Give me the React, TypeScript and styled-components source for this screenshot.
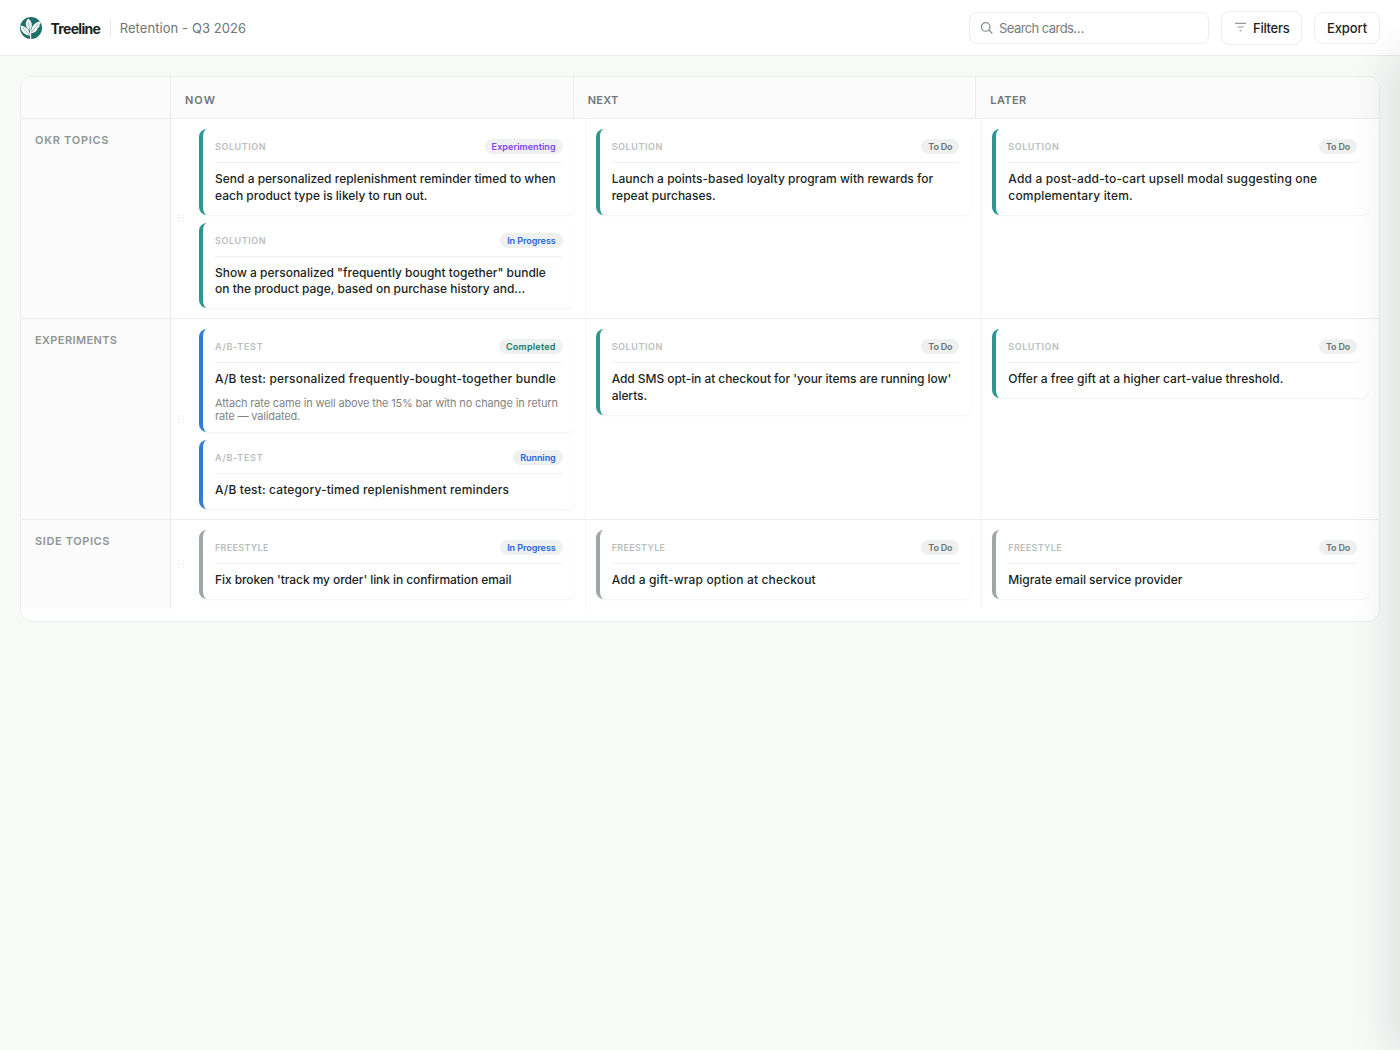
import React from "react";
import styled, { createGlobalStyle } from "styled-components";

const GlobalStyle = createGlobalStyle`
  * { box-sizing: border-box; }
  html, body { margin: 0; padding: 0; }
  body {
    background: #f8faf8;
    color: #1b1f1e;
    font-family: Inter, "Liberation Sans", sans-serif;
    overflow: hidden;
  }
`;

const line = "#eceeed";

type Kind = "solution" | "test" | "freestyle";
type Tone = "purple" | "blue" | "green" | "gray";

const stripe: Record<Kind, string> = {
  solution: "#2b9790",
  test: "#337bd9",
  freestyle: "#9fa6a6",
};
const kindLabel: Record<Kind, string> = {
  solution: "SOLUTION",
  test: "A/B-TEST",
  freestyle: "FREESTYLE",
};
const kindTrack: Record<Kind, number> = { solution: 0.56, test: 0.7, freestyle: 0.3 };
const tones: Record<Tone, string> = {
  purple: "#7f45ee",
  blue: "#2766d8",
  green: "#107a6b",
  gray: "#6c7271",
};

interface Item {
  kind: Kind;
  status: string;
  tone: Tone;
  statusTrack: number;
  title: string;
  track?: number;
  note?: string;
}

interface Lane {
  name: string;
  track: number;
  cells: Item[][];
}

const todo = { status: "To Do", tone: "gray" as Tone, statusTrack: -0.2 };

const lanes: Lane[] = [
  {
    name: "OKR TOPICS",
    track: 0.73,
    cells: [
      [
        {
          kind: "solution",
          status: "Experimenting",
          tone: "purple",
          statusTrack: 0.07,
          title: "Send a personalized replenishment reminder timed to when each product type is likely to run out.",
        },
        {
          kind: "solution",
          status: "In Progress",
          tone: "blue",
          statusTrack: -0.06,
          title: 'Show a personalized "frequently bought together" bundle on the product page, based on purchase history and…',
          track: -0.01,
        },
      ],
      [
        {
          kind: "solution",
          ...todo,
          title: "Launch a points-based loyalty program with rewards for repeat purchases.",
          track: 0.01,
        },
      ],
      [
        {
          kind: "solution",
          ...todo,
          title: "Add a post-add-to-cart upsell modal suggesting one complementary item.",
          track: 0.155,
        },
      ],
    ],
  },
  {
    name: "EXPERIMENTS",
    track: 0.39,
    cells: [
      [
        {
          kind: "test",
          status: "Completed",
          tone: "green",
          statusTrack: 0.24,
          title: "A/B test: personalized frequently-bought-together bundle",
          track: 0.18,
          note: "Attach rate came in well above the 15% bar with no change in return rate — validated.",
        },
        {
          kind: "test",
          status: "Running",
          tone: "blue",
          statusTrack: -0.06,
          title: "A/B test: category-timed replenishment reminders",
          track: 0.14,
        },
      ],
      [
        {
          kind: "solution",
          ...todo,
          title: "Add SMS opt-in at checkout for 'your items are running low' alerts.",
          track: -0.058,
        },
      ],
      [{ kind: "solution", ...todo, title: "Offer a free gift at a higher cart-value threshold.", track: 0.01 }],
    ],
  },
  {
    name: "SIDE TOPICS",
    track: 0.61,
    cells: [
      [
        {
          kind: "freestyle",
          status: "In Progress",
          tone: "blue",
          statusTrack: -0.06,
          title: "Fix broken 'track my order' link in confirmation email",
          track: -0.077,
        },
      ],
      [{ kind: "freestyle", ...todo, title: "Add a gift-wrap option at checkout", track: 0.15 }],
      [{ kind: "freestyle", ...todo, title: "Migrate email service provider" }],
    ],
  },
];

const Page = styled.div`
  height: 1050px;
  display: flex;
  flex-direction: column;
`;

const TopBar = styled.header`
  height: 56px;
  flex: none;
  display: flex;
  align-items: center;
  padding: 0 20px;
  background: #fff;
  border-bottom: 1px solid #e9ecec;
`;

const Brand = styled.span`
  margin-left: 8.5px;
  padding-top: 2px;
  font-size: 14px;
  font-weight: 700;
  letter-spacing: -0.7px;
  line-height: 20px;
`;

const Divider = styled.span`
  width: 1px;
  height: 16px;
  margin: 0 8.5px 0 10px;
  background: #e4e7e7;
`;

const BoardName = styled.span`
  padding-top: 1px;
  font-size: 13px;
  letter-spacing: 0.08px;
  line-height: 20px;
  color: #6f7675;
`;

const Actions = styled.div`
  margin-left: auto;
  display: flex;
  align-items: center;
  gap: 12px;
`;

const SearchBox = styled.label`
  width: 240px;
  height: 32px;
  display: flex;
  align-items: center;
  gap: 6px;
  padding: 0 10px;
  border: 1px solid ${line};
  border-radius: 8px;
  background: #fff;
  color: #8c9392;
`;

const Placeholder = styled.span`
  padding-top: 1px;
  font-size: 13px;
  letter-spacing: -0.57px;
  color: #777d7c;
`;

const Button = styled.button<{ $w: number; $h: number; $track: number; $inset?: number }>`
  width: ${(p) => p.$w}px;
  height: ${(p) => p.$h}px;
  display: flex;
  align-items: center;
  justify-content: center;
  gap: 7px;
  padding: 1px 0 0 ${(p) => p.$inset ?? 0}px;
  border: 1px solid ${line};
  border-radius: 8px;
  background: #fff;
  color: #1b1f1e;
  font: 500 13px Inter, "Liberation Sans", sans-serif;
  letter-spacing: ${(p) => p.$track}px;
`;

const Board = styled.main`
  margin: 20px 20px 0;
  padding-bottom: 12px;
  border: 1px solid ${line};
  border-radius: 12px;
  background: #fff;
  overflow: hidden;
`;

const HeadRow = styled.div`
  height: 42px;
  display: grid;
  grid-template-columns: 150px repeat(3, 1fr);
  background: #fbfbfb;
  border-bottom: 1px solid ${line};
`;

const HeadCell = styled.div<{ $track?: number }>`
  padding: 16px 14px 0;
  font-size: 11px;
  font-weight: 600;
  line-height: 14px;
  letter-spacing: ${(p) => p.$track ?? 0}px;
  color: #707675;
  border-right: 1px solid ${line};
  &:last-child { border-right: 0; }
`;

const LaneRow = styled.section`
  display: grid;
  grid-template-columns: 150px 18px repeat(3, minmax(0, 1fr));
  border-bottom: 1px solid ${line};
  &:last-child { border-bottom: 0; }
`;

const LaneName = styled.div<{ $track: number }>`
  padding: 14px 14px 0;
  font-size: 11px;
  font-weight: 600;
  line-height: 14px;
  letter-spacing: ${(p) => p.$track}px;
  color: #8f9594;
  background: #fbfbfb;
  border-right: 1px solid ${line};
`;

const Handle = styled.div`
  display: grid;
  place-items: center;
  padding: 0 0 1px 1px;
  color: #cdd1d0;
`;

const Cell = styled.div`
  display: flex;
  flex-direction: column;
  gap: 8px;
  padding: 10px;
  border-right: 1px solid #f4f5f5;
  &:last-child { border-right: 0; }
`;

const CardBox = styled.article<{ $kind: Kind }>`
  padding: 10px 12px 10.5px;
  border-left: 4px solid ${(p) => stripe[p.$kind]};
  border-radius: 8px;
  background: #fff;
  box-shadow: 0 1px 2px rgba(20, 30, 28, 0.06);
`;

const CardHead = styled.div`
  height: 24px;
  display: flex;
  align-items: flex-start;
  justify-content: space-between;
  border-bottom: 1px solid #f1f3f2;
`;

const Tag = styled.span<{ $kind: Kind }>`
  font-size: 9px;
  font-weight: 600;
  line-height: 15px;
  letter-spacing: ${(p) => kindTrack[p.$kind]}px;
  color: #b9bebd;
`;

const Badge = styled.span<{ $tone: Tone; $track: number }>`
  padding: 0 7px;
  border-radius: 8px;
  background: #eff0f0;
  font-size: 9px;
  font-weight: 600;
  line-height: 15px;
  letter-spacing: ${(p) => p.$track}px;
  color: ${(p) => tones[p.$tone]};
`;

const Title = styled.h3<{ $track: number }>`
  margin: 8px 0 0;
  font-size: 12px;
  font-weight: 500;
  line-height: 16.5px;
  letter-spacing: ${(p) => p.$track}px;
  color: #1b1f1e;
`;

const Note = styled.p`
  margin: 9.5px 0 -1.5px;
  font-size: 11px;
  line-height: 13px;
  letter-spacing: -0.158px;
  color: #7f8584;
`;

/* The closed details drawer rests past the right edge; only its shadow reaches the page. */
const Drawer = styled.aside`
  position: fixed;
  top: 56px;
  bottom: 0;
  left: 100%;
  width: 420px;
  background: #fff;
  box-shadow: -8px 0 40px rgba(20, 26, 24, 0.12);
`;

function Logo() {
  return (
    <svg width="22" height="22" viewBox="0 0 22 22">
      <circle cx="11" cy="11" r="11" fill="#1d7168" />
      <g fill="#fff">
        <path d="M8.300 1.400C4.900 4.800 4.700 9.400 9.700 13.400c3.300-3.900 2.700-8.400-1.400-12z" />
        <path d="M.5 8.600C.4 14 3.600 17.800 10 18.800 9.900 13.500 6.300 9.500.5 8.600z" />
        <path d="M20.900 4.300C14.800 5.300 10.600 9.400 11.300 16.200c3.200-.5 5.200-2 6.400-4.200l-1.400.1c1.800-.9 3-2.100 3.600-3.700l-1.200.2c1.200-1.100 2-2.500 2.200-4.300z" />
        <path d="M10.100 12.500h1.100V22h-1.100z" />
      </g>
      <g fill="none" stroke="#1d7168" strokeWidth=".5">
        <path d="M8.400 4.800 9.600 13M2.900 11 9.200 17.600M18.500 6.500 11.800 15" />
      </g>
    </svg>
  );
}

function SearchIcon() {
  return (
    <svg width="13" height="14" viewBox="0 0 13 14" fill="none" stroke="currentColor" strokeWidth="1.300" strokeLinecap="round">
      <circle cx="5.700" cy="5.900" r="4.300" />
      <path d="M9 9.200 11.900 12" />
    </svg>
  );
}

function FilterIcon() {
  return (
    <svg width="11" height="12" viewBox="0 0 11 12" fill="none" stroke="#949a99" strokeWidth="1.100">
      <path d="M0 1.400h11M2.500 5h6M4.600 8.600h1.800" />
    </svg>
  );
}

function Grip() {
  return (
    <svg width="6" height="8" viewBox="0 0 6 8" fill="currentColor">
      {[0, 3, 6].map((y) => (
        <React.Fragment key={y}>
          <rect x="0.500" y={y + 0.5} width="1" height="1" />
          <rect x="4.500" y={y + 0.5} width="1" height="1" />
        </React.Fragment>
      ))}
    </svg>
  );
}

function Card({ item }: { item: Item }) {
  return (
    <CardBox $kind={item.kind}>
      <CardHead>
        <Tag $kind={item.kind}>{kindLabel[item.kind]}</Tag>
        <Badge $tone={item.tone} $track={item.statusTrack}>
          {item.status}
        </Badge>
      </CardHead>
      <Title $track={item.track ?? 0}>{item.title}</Title>
      {item.note && <Note>{item.note}</Note>}
    </CardBox>
  );
}

export default function App() {
  return (
    <Page>
      <GlobalStyle />
      <TopBar>
        <Logo />
        <Brand>Treeline</Brand>
        <Divider />
        <BoardName>Retention - Q3 2026</BoardName>
        <Actions>
          <SearchBox>
            <SearchIcon />
            <Placeholder>Search cards…</Placeholder>
          </SearchBox>
          <Button $w={81} $h={34} $track={-0.3} $inset={1.5}>
            <FilterIcon />
            Filters
          </Button>
          <Button $w={66} $h={32} $track={-0.12}>
            Export
          </Button>
        </Actions>
      </TopBar>
      <Board>
        <HeadRow>
          <HeadCell />
          <HeadCell $track={1}>NOW</HeadCell>
          <HeadCell $track={0.25}>NEXT</HeadCell>
          <HeadCell $track={0.38}>LATER</HeadCell>
        </HeadRow>
        {lanes.map((lane) => (
          <LaneRow key={lane.name}>
            <LaneName $track={lane.track}>{lane.name}</LaneName>
            <Handle>
              <Grip />
            </Handle>
            {lane.cells.map((cell, i) => (
              <Cell key={i}>
                {cell.map((item) => (
                  <Card key={item.title} item={item} />
                ))}
              </Cell>
            ))}
          </LaneRow>
        ))}
      </Board>
      <Drawer />
    </Page>
  );
}
